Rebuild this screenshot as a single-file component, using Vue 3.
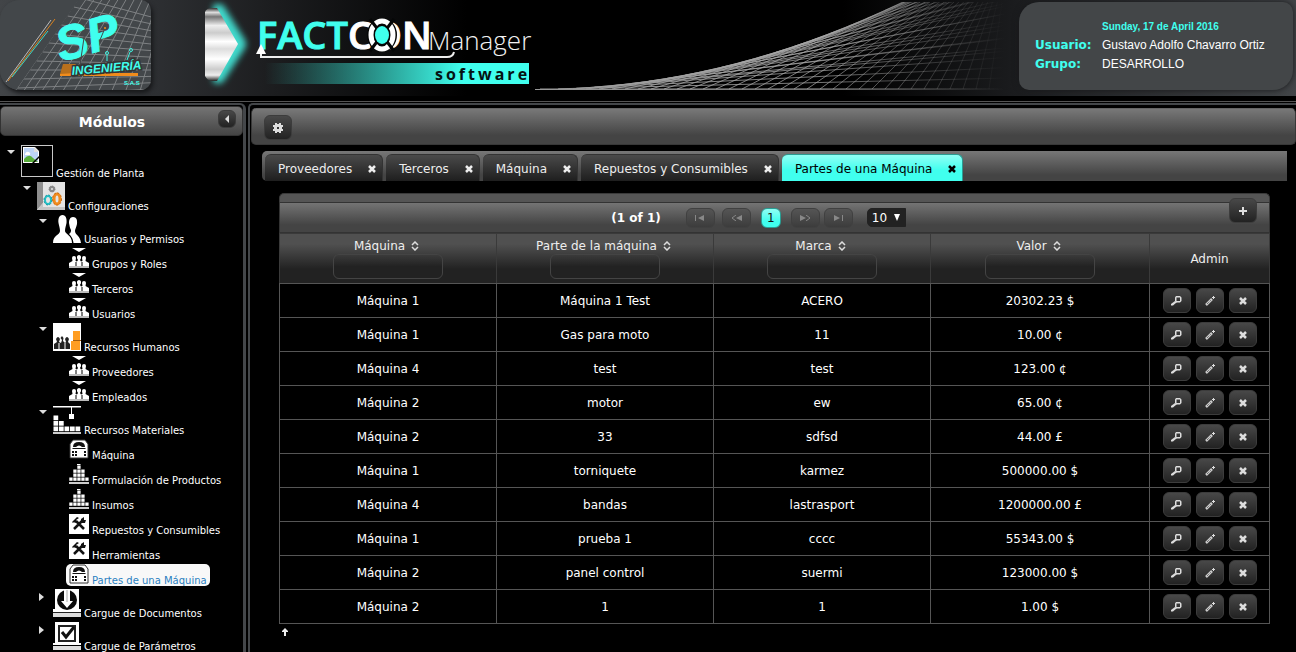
<script setup>
import { ref } from 'vue'

const tree = [
  { label: 'Gestión de Planta', level: 0, icon: 'missing', open: true },
  { label: 'Configuraciones', level: 1, icon: 'gears', open: true },
  { label: 'Usuarios y Permisos', level: 2, icon: 'users', open: true },
  { label: 'Grupos y Roles', level: 3, icon: 'group' },
  { label: 'Terceros', level: 3, icon: 'group' },
  { label: 'Usuarios', level: 3, icon: 'group' },
  { label: 'Recursos Humanos', level: 2, icon: 'staff', open: true },
  { label: 'Proveedores', level: 3, icon: 'group' },
  { label: 'Empleados', level: 3, icon: 'group' },
  { label: 'Recursos Materiales', level: 2, icon: 'crane', open: true },
  { label: 'Máquina', level: 3, icon: 'machine' },
  { label: 'Formulación de Productos', level: 3, icon: 'stack' },
  { label: 'Insumos', level: 3, icon: 'stack' },
  { label: 'Repuestos y Consumibles', level: 3, icon: 'tools' },
  { label: 'Herramientas', level: 3, icon: 'tools' },
  { label: 'Partes de una Máquina', level: 3, icon: 'machine', selected: true },
  { label: 'Cargue de Documentos', level: 2, icon: 'download', open: false },
  { label: 'Cargue de Parámetros', level: 2, icon: 'check', open: false },
]
const iconSize = (n) => (n.level === 0 ? 32 : n.level === 3 ? 20 : 28)

const tabs = ['Proveedores', 'Terceros', 'Máquina', 'Repuestos y Consumibles', 'Partes de una Máquina']
const active = ref(4)

const columns = ['Máquina', 'Parte de la máquina', 'Marca', 'Valor']
const rows = [
  ['Máquina 1', 'Máquina 1 Test', 'ACERO', '20302.23 $'],
  ['Máquina 1', 'Gas para moto', '11', '10.00 ¢'],
  ['Máquina 4', 'test', 'test', '123.00 ¢'],
  ['Máquina 2', 'motor', 'ew', '65.00 ¢'],
  ['Máquina 2', '33', 'sdfsd', '44.00 £'],
  ['Máquina 1', 'torniquete', 'karmez', '500000.00 $'],
  ['Máquina 4', 'bandas', 'lastrasport', '1200000.00 £'],
  ['Máquina 1', 'prueba 1', 'cccc', '55343.00 $'],
  ['Máquina 2', 'panel control', 'suermi', '123000.00 $'],
  ['Máquina 2', '1', '1', '1.00 $'],
]

// Wave mesh: tangents of a parabola crossed by a fan of steeper lines.
const mesh = []
for (let k = 0; k <= 20; k++) {
  const t = k / 20
  const x = 5 + 363 * t
  const y = 89 - 87 * t * t
  mesh.push([x, y, 470, y - 0.479 * t * (470 - x)])
}
for (let b = 38; b < 466; b += 13) {
  const t = (b - 5) / 181
  const top = b <= 186 ? b + 87 / (0.479 * t) : 368 + (b - 186) * 0.37
  mesh.push([b, 89, top, 2])
}

// Perspective grid behind the company logo.
const grid = []
for (let i = 0; i < 16; i++) {
  grid.push([16 + i * 8 + i * i * 0.3, 90, 79 + i * 8, -2])
  const s = i / 10
  grid.push([80 - 62 * s, 90 * s - 2, 170, 90 * s + 22 - i * 3])
}
const blocks = (heights, w, base) =>
  heights.flatMap((h, i) => Array.from({ length: h }, (_, j) => [i * w, base - (j + 1) * w]))
const stackBlocks = blocks([1, 3, 4, 3, 1], 4, 17)
const craneBlocks = blocks([3, 2, 1, 1, 1], 5.5, 26)
</script>

<template>
  <div class="app">
    <header class="banner">
      <svg class="company" viewBox="0 0 151 90" role="img" aria-label="SP Ingeniería">
        <g class="grid">
          <line v-for="(l, i) in grid" :key="i" :x1="l[0]" :y1="l[1]" :x2="l[2]" :y2="l[3]" />
        </g>
        <path d="M0 -2H80L16 90H0z" fill="#43474a" />
        <path d="M6 82L51 20" stroke="#bbb" />
        <path d="M8 81L55 19" stroke="#d8821f" />
        <path d="M12 77L48 31" stroke="#3fd6c6" />
        <path d="M63 64H76L73 74H60z" fill="#b8701c" />
        <path d="M75 73H138V76H60V74z" fill="#f08c1c" />
        <text class="sp" x="61" y="62" transform="rotate(-16 61 62)">SP</text>
        <path d="M79 72L86 24M100 40L105 28" stroke="#43474a" />
        <circle cx="105" cy="28" r="1" fill="#f08c1c" />
        <text class="ing" x="72" y="75" transform="rotate(-5 72 75)">INGENIERÍA</text>
        <path d="M107 61V55M127 60L130 52" stroke="#40f3e0" />
        <circle cx="107" cy="53" r="1.500" fill="none" stroke="#40f3e0" />
        <circle cx="131" cy="50" r="1.500" fill="none" stroke="#40f3e0" />
        <text class="sas" x="124" y="85">S.A.S</text>
      </svg>
      <svg class="brand" viewBox="0 0 330 94" role="img" aria-label="FACTCON Manager software">
        <defs>
          <linearGradient id="steel" x1="0" y1="0" x2="0" y2="1">
            <stop offset="0" stop-color="#333" /><stop offset=".06" stop-color="#ddd" />
            <stop offset=".12" stop-color="#777" /><stop offset=".24" stop-color="#eee" />
            <stop offset=".34" stop-color="#ccc" /><stop offset=".46" stop-color="#fff" />
            <stop offset=".56" stop-color="#ddd" /><stop offset=".7" stop-color="#fff" />
            <stop offset=".84" stop-color="#ccc" /><stop offset=".92" stop-color="#eee" />
            <stop offset="1" stop-color="#222" />
          </linearGradient>
          <linearGradient id="bar"><stop offset="0" stop-color="#40ffee" stop-opacity="0" /><stop offset=".75" stop-color="#40ffee" /></linearGradient>
          <filter id="glow" x="-50%" y="-20%" width="200%" height="140%"><feGaussianBlur stdDeviation="3" /></filter>
        </defs>
        <path d="M8 5Q12 3 18 5L40 40Q42 44 40 48L18 82Q12 85 8 82z" fill="#40d8cb" filter="url(#glow)" />
        <path d="M0 12Q2 8 6 8H12L33 44L12 81H6Q2 80 0 76z" fill="url(#steel)" />
        <rect x="60" y="63" width="264" height="21" fill="url(#bar)" />
        <text class="factcon" x="52" y="49"><tspan class="fact">FACT</tspan><tspan class="con">CON</tspan></text>
        <ellipse cx="177" cy="35" rx="13" ry="15" fill="#060707" stroke="#060707" stroke-width="4" />
        <ellipse cx="177" cy="35" rx="11" ry="14" fill="none" stroke="#fff" stroke-width="5" />
        <path d="M165 19L189 51M189 19L165 51" stroke="#060707" stroke-width="3" />
        <ellipse cx="177" cy="35" rx="8" ry="10" fill="#060707" />
        <ellipse cx="177" cy="35" rx="7" ry="9" fill="#40ffee" />
        <text class="manager" x="223" y="50">Manager</text>
        <path d="M56 50V57H242Q248 57 249 52" fill="none" stroke="#eee" stroke-width="2" />
        <path d="M56 44L61 54H51z" fill="#fff" />
        <text class="software" x="230" y="80">software</text>
      </svg>
      <svg class="mesh" viewBox="0 0 470 96" aria-hidden="true">
        <defs>
          <linearGradient id="fade" gradientUnits="userSpaceOnUse" x1="0" y1="0" x2="470" y2="0">
            <stop offset="0" stop-color="#999" /><stop offset=".6" stop-color="#aaa" stop-opacity=".7" />
            <stop offset=".8" stop-color="#999" stop-opacity=".4" /><stop offset="1" stop-color="#888" stop-opacity="0" />
          </linearGradient>
          <clipPath id="meshClip"><rect x="0" y="2" width="470" height="88" /></clipPath>
        </defs>
        <g clip-path="url(#meshClip)" stroke="url(#fade)">
          <path d="M0 89.500L470 89" />
          <line v-for="(l, i) in mesh" :key="i" :x1="l[0]" :y1="l[1]" :x2="l[2]" :y2="l[3]" />
        </g>
      </svg>
      <dl class="user">
        <dt></dt><dd class="date">Sunday, 17 de April 2016</dd>
        <dt>Usuario:</dt><dd>Gustavo Adolfo Chavarro Ortiz</dd>
        <dt>Grupo:</dt><dd>DESARROLLO</dd>
      </dl>
    </header>

    <div class="layout">
      <aside class="west">
        <div class="west-head">
          <h2>Módulos</h2>
          <button class="btn collapse" type="button" aria-label="Contraer">
            <svg width="6" height="8" viewBox="0 0 6 8"><path d="M5 0V8L1 4z" fill="#ddd" /></svg>
          </button>
        </div>
        <ul class="tree">
          <li v-for="(n, i) in tree" :key="i" :class="['node', 'level-' + n.level]">
            <span class="toggle">
              <svg v-if="n.open === true" width="8" height="5" viewBox="0 0 8 5"><path d="M0 0H8L4 4z" fill="#ddd" /></svg>
              <svg v-else-if="n.open === false" width="5" height="8" viewBox="0 0 5 8"><path d="M0 0V8L5 4z" fill="#ddd" /></svg>
            </span>
            <a href="#" :class="{ selected: n.selected }">
              <svg v-if="n.icon === 'missing'" :width="iconSize(n)" :height="iconSize(n)" viewBox="0 0 32 32">
                <rect x=".5" y=".5" width="31" height="31" fill="#000" stroke="#c8c8c8" />
                <path d="M2 2H14L18 6V18H2z" fill="#fff" /><path d="M3 3H13L17 7V17H3z" fill="#bcd3f5" />
                <path d="M4 9Q5 6 8 7Q10 8 9 10H4z" fill="#fff" />
                <path d="M3 17V14Q8 8 12 13L17 17z" fill="#58ad3b" /><path d="M11 18L18 11V13L13 18z" fill="#000" />
                <path d="M13 2V7H18z" fill="#ddd" />
              </svg>
              <svg v-else-if="n.icon === 'gears'" :width="iconSize(n)" :height="iconSize(n)" viewBox="0 0 28 28">
                <rect width="28" height="28" fill="#e4e4e4" /><path d="M0 0H6V21L0 28z" fill="#8f8f8f" /><path d="M6 21L0 28H28V25H6z" fill="#c4c4c4" />
                <g fill="none">
                  <circle cx="15" cy="7" r="2" stroke="#888" stroke-width="2" /><circle cx="15" cy="7" r="3" stroke="#777" stroke-dasharray="1 1" />
                  <ellipse cx="11" cy="18" rx="3" ry="4" stroke="#20bfc4" stroke-width="2" /><ellipse cx="11" cy="18" rx="4" ry="5" stroke="#1595a0" stroke-dasharray="2 1.500" />
                  <ellipse cx="20" cy="17" rx="3" ry="5" stroke="#f08b1d" stroke-width="3" /><ellipse cx="20" cy="17" rx="4.500" ry="6" stroke="#c96a12" stroke-dasharray="2 1.500" />
                </g>
              </svg>
              <svg v-else-if="n.icon === 'users'" :width="iconSize(n)" :height="iconSize(n)" viewBox="0 0 28 28" fill="#fff">
                <path d="M9.500 0C13 0 14 4 13.500 8C13 11 12 13 12 16C12 19 19 20 19 28H0C0 20 7 20 7 16C7 13 6 11 5.500 8C5 4 6 0 9.500 0z" />
                <path d="M20 2C23.500 2 24.500 5 24 9C23.500 12 22 14 22 16C22 20 27 20 28 28H20.500C20 23 18 21 16 19C18 18 18 16 18 15C17 13 16.500 11 16 8C16 5 17 2 20 2z" />
              </svg>
              <svg v-else-if="n.icon === 'group'" :width="iconSize(n)" :height="iconSize(n)" viewBox="0 0 20 20" fill="#fff">
                <path d="M3 0H17L10 4z" />
                <path d="M0 18V15L3.500 13L3 10Q3 8 5 8T7 10L6.500 13L8 13.500L9 12Q7.500 10 8 8.500Q8.500 7 10 7T12 8.500Q12.500 10 11 12L12 13.500L13.500 13L13 10Q13 8 15 8T17 10L16.500 13L20 15V18z" />
                <path d="M0 18H20V20H0z" fill="#bbb" /><path d="M7 14V18M13 14V18" stroke="#000" stroke-width="1" />
              </svg>
              <svg v-else-if="n.icon === 'staff'" :width="iconSize(n)" :height="iconSize(n)" viewBox="0 0 28 28">
                <rect width="28" height="28" fill="#fff" /><path d="M20 8H27V17H20zM18 18H27V27H18z" fill="#ff9d22" /><path d="M20 17.500H28" stroke="#a35c0b" />
                <path d="M1 26V21L4 19L3 16Q4 14 5 14T7 16L6 19L8 20L9 17L7.500 15L9 13L10.500 15L10 18L12 20L13 19L12 16Q13 14 14 14T16 16L15 19L17 21V26z" fill="#222" />
                <path d="M6 20V26M12 20V26" stroke="#fff" />
              </svg>
              <svg v-else-if="n.icon === 'crane'" :width="iconSize(n)" :height="iconSize(n)" viewBox="0 0 28 28" fill="#fff">
                <path d="M0 0H28V1.500H0zM18 1H19V9H18zM16 8H21V13H16z" />
                <rect v-for="(b, j) in craneBlocks" :key="j" :x="b[0] + 0.5" :y="b[1]" width="4.700" height="4.700" />
                <path d="M0 26H28V28H0z" fill="#ccc" />
              </svg>
              <svg v-else-if="n.icon === 'machine'" :width="iconSize(n)" :height="iconSize(n)" viewBox="0 0 20 20">
                <path d="M1 19V5L4 1H16L19 5V19z" fill="#fff" stroke="#333" /><path d="M4 8Q4 3 10 3T16 8H13Q10 5 7 8z" fill="#111" />
                <path d="M3.500 9.500H16.500" stroke="#111" /><path d="M3 12h2v2h-2zM6 12h2v2h-2zM15 12h2v2h-2zM3 15h2v2h-2zM6 15h2v2h-2zM15 15h2v2h-2z" fill="#111" />
              </svg>
              <svg v-else-if="n.icon === 'stack'" :width="iconSize(n)" :height="iconSize(n)" viewBox="0 0 20 20" fill="#fff">
                <rect v-for="(b, j) in stackBlocks" :key="j" :x="b[0] + 0.300" :y="b[1] + 0.500" width="3.300" height="3.300" />
                <path d="M8 0H11.500V1H8z" /><path d="M0 18H20V20H0z" fill="#ccc" />
              </svg>
              <svg v-else-if="n.icon === 'tools'" :width="iconSize(n)" :height="iconSize(n)" viewBox="0 0 20 20">
                <rect width="20" height="20" fill="#fff" />
                <path d="M5 15L13 7M7 7L15 15" stroke="#111" stroke-width="2.500" />
                <path d="M12 8V5L15 3V6H17L16 9H13zM3 8L8 3L10 4L7 6L8 8L6 9L5 8L4 9z" fill="#111" />
              </svg>
              <svg v-else-if="n.icon === 'download'" :width="iconSize(n)" :height="iconSize(n)" viewBox="0 0 28 28">
                <path d="M2 0H26V20H28V23H0V20H2z" fill="#fff" /><path d="M0 24H28V28H0z" fill="#ddd" />
                <path d="M0 23.500H28" stroke="#222" /><circle cx="14" cy="11" r="10" fill="#0a0a0a" />
                <path d="M11 0H17V12H20L14 19L8 12H11z" fill="#fff" />
                <path d="M14 1V13" stroke="#aaa" />
              </svg>
              <svg v-else :width="iconSize(n)" :height="iconSize(n)" viewBox="0 0 28 28">
                <path d="M2 0H26V21H28V23H0V21H2z" fill="#fff" /><path d="M0 24H28V28H0z" fill="#ddd" />
                <rect x="6" y="4" width="16" height="15" fill="none" stroke="#222" stroke-width="2" />
                <path d="M9 10L13 15L21 5" fill="none" stroke="#111" stroke-width="3" />
              </svg>
              <span>{{ n.label }}</span>
            </a>
          </li>
        </ul>
      </aside>

      <main class="center">
        <div class="toolbar">
          <button class="btn" type="button" aria-label="Ajustes">
            <svg width="10" height="10" viewBox="0 0 10 10"><path d="M2 0h2v1h2v-1h2v2h2v2h-1v2h1v2h-2v2h-2v-1h-2v1h-2v-2h-2v-2h1v-2h-1v-2h2zM4 4v2h2v-2z" fill="#ddd" fill-rule="evenodd" /></svg>
          </button>
        </div>
        <ul class="tabs">
          <li v-for="(t, i) in tabs" :key="t" :class="{ active: i === active }">
            <button class="tab" type="button" @click="active = i">{{ t }}</button>
            <button class="close" type="button" :aria-label="'Cerrar ' + t">
              <svg width="8" height="8" viewBox="0 0 8 8"><path d="M1 1L7 7M7 1L1 7" stroke="currentColor" stroke-width="2.500" /></svg>
            </button>
          </li>
        </ul>

        <section class="grid-panel">
          <div class="cap"></div>
          <button class="btn add" type="button" aria-label="Agregar">
            <svg width="8" height="8" viewBox="0 0 8 8"><path d="M3 0h2v3h3v2h-3v3h-2v-3h-3v-2h3z" fill="#ddd" /></svg>
          </button>
          <nav class="pager">
            <span class="count">(1 of 1)</span>
            <button class="pg first" type="button" disabled aria-label="Primera"><svg width="10" height="6" viewBox="0 0 10 6"><path d="M0 0h1v6h-1zM9 0V6L3 3z" fill="#888" /></svg></button>
            <button class="pg prev" type="button" disabled aria-label="Anterior"><svg width="11" height="6" viewBox="0 0 11 6"><path d="M5 0L1 3L5 6" fill="none" stroke="#888" /><path d="M11 0V6L5 3z" fill="#888" /></svg></button>
            <button class="pg current" type="button">1</button>
            <button class="pg next" type="button" disabled aria-label="Siguiente"><svg width="11" height="6" viewBox="0 0 11 6"><path d="M6 0L10 3L6 6" fill="none" stroke="#888" /><path d="M0 0V6L6 3z" fill="#888" /></svg></button>
            <button class="pg last" type="button" disabled aria-label="Última"><svg width="10" height="6" viewBox="0 0 10 6"><path d="M9 0h1v6h-1zM1 0V6L7 3z" fill="#888" /></svg></button>
            <label class="size">
              <select aria-label="Filas por página"><option>10</option></select>
              <svg width="6" height="7" viewBox="0 0 6 7"><path d="M0 0H6L3 7z" fill="#fff" /></svg>
            </label>
          </nav>
          <table>
            <colgroup><col class="c" /><col class="c" /><col class="c" /><col /><col class="admin" /></colgroup>
            <thead>
              <tr>
                <th v-for="(c, i) in columns" :key="c">
                  <label :for="'filter-' + i">{{ c }}
                    <svg width="8" height="10" viewBox="0 0 8 10"><path d="M1 4L4 1L7 4M1 6L4 9L7 6" fill="none" stroke="#ddd" stroke-width="1.500" /></svg>
                  </label>
                  <input :id="'filter-' + i" type="text" />
                </th>
                <th>Admin</th>
              </tr>
            </thead>
            <tbody>
              <tr v-for="(r, i) in rows" :key="i">
                <td v-for="(v, j) in r" :key="j">{{ v }}</td>
                <td>
                  <div class="actions">
                    <button class="btn" type="button" aria-label="Ver"><svg width="11" height="10" viewBox="0 0 11 10"><path d="M5 0H9L10.500 1.500V5L9 6.500H5L4 5V1.500zM5.500 1.500V5H9V1.500z" fill="#ddd" fill-rule="evenodd" /><path d="M4 5L6 6L2 9.500H0V8z" fill="#ddd" /></svg></button>
                    <button class="btn" type="button" aria-label="Editar"><svg width="10" height="10" viewBox="0 0 10 10"><path d="M1 9L7 3" stroke="#ccc" stroke-width="2.500" /><path d="M2 8L6 4" stroke="#444" stroke-width="1" stroke-dasharray="1 1" /><path d="M8 0h1v1h1v1h-1v1h-1v-1h-1v-1h1z" fill="#ddd" /></svg></button>
                    <button class="btn" type="button" aria-label="Eliminar"><svg width="8" height="8" viewBox="0 0 8 8"><path d="M1 1L7 7M7 1L1 7" stroke="#ddd" stroke-width="2.500" /></svg></button>
                  </div>
                </td>
              </tr>
            </tbody>
          </table>
        </section>
        <button class="to-top" type="button" aria-label="Subir">
          <svg width="8" height="8" viewBox="0 0 8 8"><path d="M4 0L7 3V4H5V8H3V4H1V3z" fill="#eee" /></svg>
        </button>
      </main>
    </div>
  </div>
</template>

<style>
html, body { background: #000; }
</style>

<style scoped>
* { box-sizing: border-box; }
.app {
  height: 100vh;
  display: flex;
  flex-direction: column;
  overflow: hidden;
  background: #000;
  color: #fff;
  font: 12px/16px "DejaVu Sans", Verdana, sans-serif;
}
button, input, select { font: inherit; color: inherit; margin: 0; padding: 0; }
svg { display: block; flex: none; }
ul, dl, dd, h2 { margin: 0; padding: 0; list-style: none; }

.banner {
  flex: none;
  height: 96px;
  display: flex;
  align-items: flex-start;
  background: linear-gradient(90deg, #424548 0%, #2d2f32 12%, #1c1d1f 21%, #000 36%, #000 65%, #1a1b1d 78%, #424548 100%);
}
.company {
  width: 151px;
  height: 90px;
  background: #43474a;
  border-radius: 20px 10px 10px 20px;
  box-shadow: 2px 3px 4px #17181a;
}
.grid { stroke: #7e8183; stroke-width: 1; }
.sp { font: italic bold 48px "Liberation Sans", Arial, sans-serif; fill: #40ffee; stroke: #40ffee; stroke-width: 1px; }
.ing { font: italic bold 12px "Liberation Sans", Arial, sans-serif; fill: #40ffee; stroke: #333; stroke-width: 3px; paint-order: stroke; }
.sas { font: bold 6px "Liberation Sans", Arial, sans-serif; fill: #40ffee; }
.brand { width: 330px; height: 94px; margin-left: 54px; }
.factcon { font: 600 38px "Open Sans", sans-serif; stroke-width: 1px; }
.fact { fill: #40ffee; stroke: #40ffee; }
.con { fill: #fff; stroke: #fff; }
.manager { font: 300 26px "Open Sans", sans-serif; fill: #f2f2f2; }
.software { font: bold 16px "Open Sans", sans-serif; letter-spacing: 3px; fill: #051212; }
.mesh { width: 470px; height: 96px; }
.user {
  margin: 2px 3px 0 auto;
  width: 274px;
  height: 88px;
  padding: 17px 16px 0;
  display: grid;
  grid-template-columns: 67px 1fr;
  grid-template-rows: 16px 19px 19px;
  align-items: center;
  background: #434648;
  border-radius: 20px 10px 20px 10px;
  box-shadow: 0 0 6px #17181a;
}
dt { color: #40ffee; font-weight: bold; }
dd { font: 12px/16px "Liberation Sans", Arial, sans-serif; white-space: nowrap; }
dd.date { color: #40ffee; font-weight: bold; font-size: 10px; }

.layout {
  flex: 1;
  min-height: 0;
  display: flex;
  gap: 2px;
  margin-top: 5px;
  padding-top: 1px;
  border-top: 1px solid #555;
}
.west {
  flex: none;
  width: 246px;
  border: solid #44474a;
  border-width: 2px 3px 0 0;
  border-radius: 0 6px 0 0;
  padding-top: 1px;
  overflow: hidden;
}
.west-head {
  position: relative;
  height: 30px;
  border: 1px solid #333;
  border-radius: 5px;
  background: linear-gradient(#747474, #444);
}
.west-head h2 { font-size: 14px; line-height: 30px; text-align: center; padding-right: 19px; }
.btn {
  display: flex;
  align-items: center;
  justify-content: center;
  width: 28px;
  height: 25px;
  border: 1px solid #3c3c3c;
  border-radius: 6px;
  background: linear-gradient(#484848, #222);
}
.btn.collapse { position: absolute; right: 6px; top: 3px; width: 18px; height: 18px; }
.tree { padding: 7px 0 0 5px; font-size: 10px; line-height: 12px; }
.node { display: flex; height: 33px; }
.level-0 { height: 36px; }
.level-1 { padding-left: 16px; }
.level-2 { padding-left: 32px; }
.level-3 { padding-left: 48px; height: 25px; }
.toggle { width: 16px; padding: 7px 0 0 2px; }
.node a {
  align-self: flex-end;
  display: flex;
  align-items: flex-end;
  gap: 3px;
  padding-bottom: 2px;
  color: #fff;
  text-decoration: none;
  white-space: nowrap;
}
.node a.selected { background: #f8f8f8; color: #2a7fc0; border-radius: 5px; margin-left: -3px; padding: 0 3px 2px; }
.node a span { margin-bottom: -3px; }

.center {
  flex: 1;
  min-width: 0;
  border: solid #44474a;
  border-width: 2px 0 0 2px;
  border-radius: 5px 0 0 0;
  padding: 3px 0 0 1px;
}
.toolbar {
  height: 37px;
  padding: 6px 12px;
  border: 1px solid #383838;
  border-top-color: #666;
  border-radius: 5px;
  background: linear-gradient(#787878, #444 75%);
}
.tabs {
  display: flex;
  gap: 3px;
  height: 30px;
  margin: 6px 9px 0 11px;
  padding: 3px 3px 0;
  border-radius: 5px 0 0 5px;
  background: linear-gradient(#777, #444 80%);
}
.tabs li {
  display: flex;
  align-items: center;
  gap: 16px;
  padding: 2px 6px 0 13px;
  border: 1px solid #333;
  border-width: 1px 1px 0 0;
  border-radius: 6px 6px 0 0;
  background: linear-gradient(#4a4a4a, #1e1e1e);
  color: #eee;
}
.tabs li.active { background: linear-gradient(#90fff5, #40ffee 60%); border-color: #2a9d93; color: #000; }
.tab, .close { background: none; border: 0; white-space: nowrap; }

.grid-panel { position: relative; margin: 12px 26px 0 28px; }
.cap { height: 9px; border: 1px solid #3a3a3a; border-bottom: 0; border-radius: 5px 5px 0 0; background: #555; }
.btn.add { position: absolute; right: 13px; top: 5px; }
.pager {
  display: flex;
  align-items: center;
  justify-content: center;
  height: 31px;
  padding-right: 32px;
  border: 1px solid #333;
  background: linear-gradient(#747474, #444 75%);
}
.count { font-weight: bold; margin-right: 25px; }
.pg {
  display: flex;
  align-items: center;
  justify-content: center;
  width: 29px;
  height: 20px;
  border: 1px solid #404040;
  border-radius: 6px;
  background: linear-gradient(#555, #3c3c3c);
}
.prev { margin-left: 7px; }
.current { width: 20px; margin: 0 10px; background: linear-gradient(#90fff5, #40ffee 70%); border-color: #2a9d93; color: #111; }
.last { margin-left: 4px; }
.size { position: relative; margin-left: 14px; }
.size select { display: block; appearance: none; width: 39px; height: 19px; padding-left: 4px; border: 1px solid #222; border-radius: 5px 0 0 5px; background: #222; }
.size svg { position: absolute; right: 6px; top: 6px; pointer-events: none; }

table { width: 100%; table-layout: fixed; border-collapse: collapse; }
.c { width: 217px; }
.admin { width: 120px; }
thead tr { height: 49px; background: linear-gradient(#505050 20%, #222 70%); }
th, td { padding: 0; text-align: center; border: 1px solid #555; }
th { font-weight: normal; color: #eee; border-color: #3a3a3a; border-bottom-color: #555; }
th label { display: flex; align-items: center; justify-content: center; gap: 6px; height: 20px; padding: 4px 3px 0 0; }
th input { display: block; width: 110px; height: 25px; margin: 0 auto 4px; padding: 0 6px; border: 1px solid #444; border-radius: 6px; background: linear-gradient(#3a3a3a, #222 50%); }
tbody tr { height: 34px; }
.actions { display: flex; justify-content: center; gap: 5px; }
.to-top { display: block; margin: 4px 0 0 30px; border: 0; background: none; }
</style>
